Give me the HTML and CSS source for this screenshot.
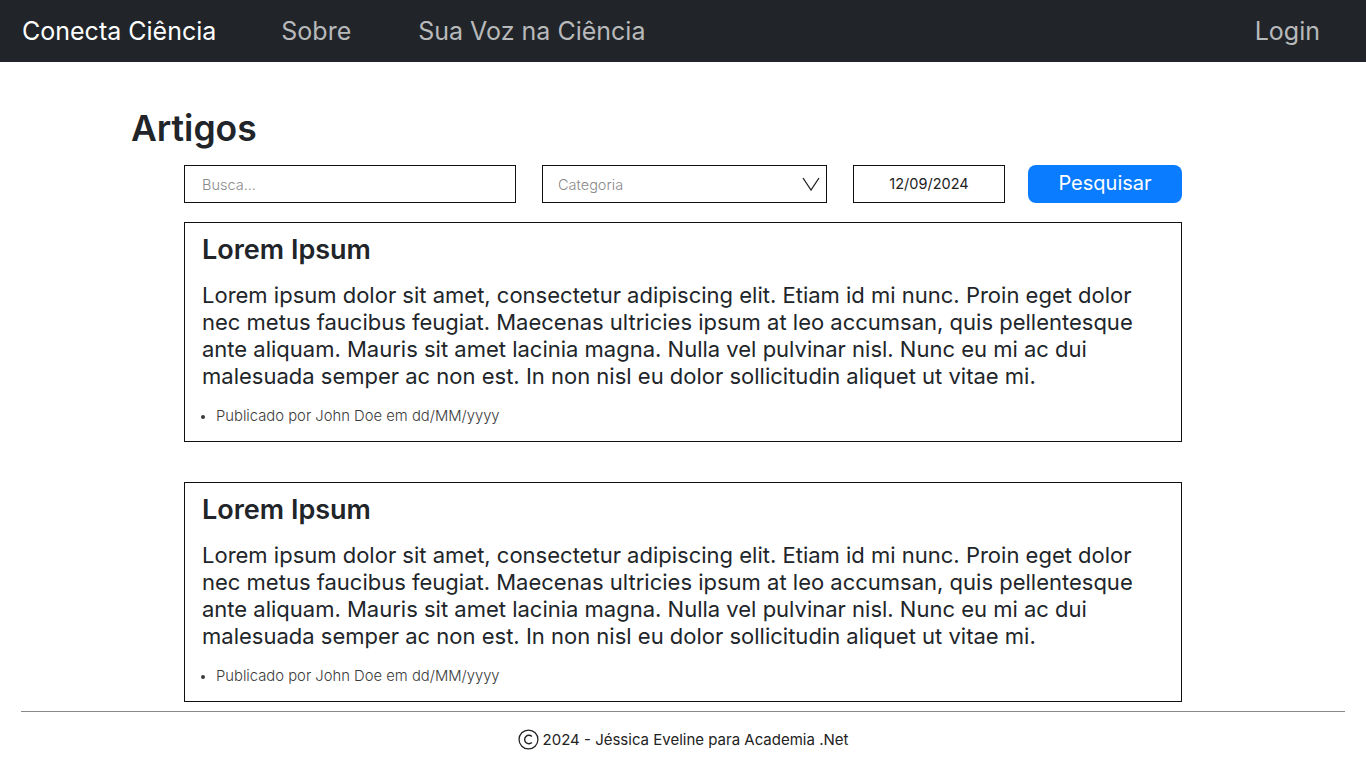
FILE: index.html
```html
<!DOCTYPE html>
<html lang="pt-BR">
<head>
<meta charset="utf-8">
<title>Conecta Ciência</title>
<link rel="stylesheet" href="styles.css">
</head>
<body>
<header class="navbar">
  <a class="brand" href="#">Conecta Ciência</a>
  <nav class="nav-links">
    <a href="#">Sobre</a>
    <a href="#">Sua Voz na Ciência</a>
  </nav>
  <a class="login" href="#">Login</a>
</header>
<main class="container">
  <h1 class="page-title">Artigos</h1>
  <div class="content">
    <form class="filters">
      <div class="field field-search">Busca...</div>
      <div class="field field-select"><span>Categoria</span>
        <svg class="chev" width="18" height="14" viewBox="0 0 18 14"><path d="M1 1 L9 13 L17 1" fill="none" stroke="#222" stroke-width="1.3"/></svg>
      </div>
      <div class="field field-date">12/09/2024</div>
      <button type="button" class="btn">Pesquisar</button>
    </form>
    <article class="card">
      <h2>Lorem Ipsum</h2>
      <p>Lorem ipsum dolor sit amet, consectetur adipiscing elit. Etiam id mi nunc. Proin eget dolor nec metus faucibus feugiat. Maecenas ultricies ipsum at leo accumsan, quis pellentesque ante aliquam. Mauris sit amet lacinia magna. Nulla vel pulvinar nisl. Nunc eu mi ac dui malesuada semper ac non est. In non nisl eu dolor sollicitudin aliquet ut vitae mi.</p>
      <ul class="meta"><li>Publicado por John Doe em dd/MM/yyyy</li></ul>
    </article>
    <article class="card">
      <h2>Lorem Ipsum</h2>
      <p>Lorem ipsum dolor sit amet, consectetur adipiscing elit. Etiam id mi nunc. Proin eget dolor nec metus faucibus feugiat. Maecenas ultricies ipsum at leo accumsan, quis pellentesque ante aliquam. Mauris sit amet lacinia magna. Nulla vel pulvinar nisl. Nunc eu mi ac dui malesuada semper ac non est. In non nisl eu dolor sollicitudin aliquet ut vitae mi.</p>
      <ul class="meta"><li>Publicado por John Doe em dd/MM/yyyy</li></ul>
    </article>
  </div>
</main>
<footer class="footer">
  <div class="copy">
    <svg class="copy-icon" width="21" height="21" viewBox="0 0 20 20"><circle cx="10" cy="10" r="9" fill="none" stroke="#222" stroke-width="1.2"/><path d="M13.2 7.2 A4 4 0 1 0 13.2 12.8" fill="none" stroke="#222" stroke-width="1.3"/></svg>
    <span>2024 - Jéssica Eveline para Academia .Net</span>
  </div>
</footer>
</body>
</html>
```
FILE: styles.css
```css
* { box-sizing: border-box; }
html, body { margin: 0; padding: 0; }
body {
  font-family: Inter, "Noto Sans", sans-serif;
  color: #212529;
  background: #fff;
}
a { text-decoration: none; }

.navbar {
  height: 62px;
  background: #212529;
  display: flex;
  align-items: center;
  padding: 0 46px 0 22px;
}
.brand {
  color: #fff;
  font-size: 25px;
  margin-right: 65px;
}
.nav-links {
  display: flex;
  gap: 67px;
  flex: 1;
}
.nav-links a, .login {
  color: #b8b9bb;
  font-size: 25px;
}

.container {
  width: 1102px;
  margin: 0 auto;
  padding-top: 45px;
}
.page-title {
  margin: 0 0 14px -1px;
  font-size: 35.5px;
  font-weight: 600;
  line-height: 44px;
}
.content {
  width: 998px;
  margin: 0 auto;
  display: flex;
  flex-direction: column;
}
.filters {
  display: flex;
  height: 38px;
  margin-bottom: 19px;
}
.field {
  border: 1px solid #111;
  height: 38px;
  display: flex;
  align-items: center;
  font-size: 14.5px;
}
.field-search {
  width: 332px;
  padding-left: 17px;
  color: #8a8a8a;
  margin-right: 26px;
  font-weight: 300;
}
.field-select {
  width: 285px;
  padding: 0 6px 0 15px;
  color: #8a8a8a;
  justify-content: space-between;
  margin-right: 26px;
  font-weight: 300;
}
.field-date {
  width: 152px;
  justify-content: center;
  color: #222;
  margin-right: 23px;
  padding-bottom: 2px;
}
.btn {
  width: 154px;
  height: 38px;
  border: none;
  border-radius: 8px;
  background: #0a7cff;
  color: #fff;
  font-family: inherit;
  font-size: 20px;
  padding: 0 0 2px 0;
}

.card {
  border: 1px solid #111;
  padding: 10px 17px 15px 17px;
  margin-bottom: 40px;
}
.card:last-child { margin-bottom: 0; }
.card h2 {
  margin: 0 0 15px 0;
  font-size: 27px;
  font-weight: 600;
  line-height: 34px;
}
.card p {
  margin: 0 0 16px 0;
  font-size: 22px;
  line-height: 27px;
}
.meta {
  margin: 0;
  padding: 0 0 0 14px;
  font-size: 14.8px;
  line-height: 20px;
  color: #3a3a3a;
  font-weight: 300;
}
.meta li::marker { font-size: 12px; }

.footer {
  margin: 9px 21px 0 21px;
  border-top: 1px solid #888;
  padding-top: 17px;
  display: flex;
  justify-content: center;
}
.copy {
  display: flex;
  align-items: center;
  gap: 4px;
  font-size: 15px;
  color: #222;
}
```
